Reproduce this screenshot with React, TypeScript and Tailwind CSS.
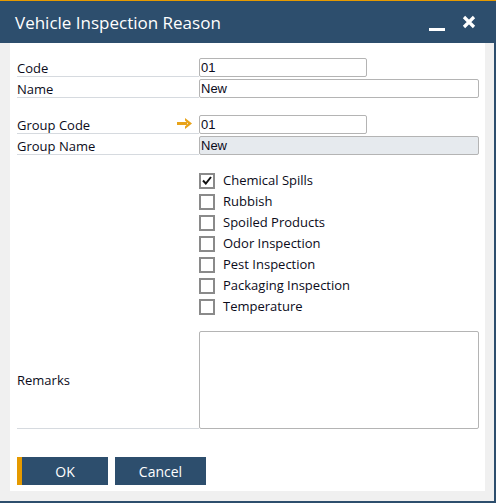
import { useState } from "react";

const items = [
    { label: "Chemical Spills", checked: true },
    { label: "Rubbish", checked: false },
    { label: "Spoiled Products", checked: false },
    { label: "Odor Inspection", checked: false },
    { label: "Pest Inspection", checked: false },
    { label: "Packaging Inspection", checked: false },
    { label: "Temperature", checked: false },
];

const Label = ({ text, arrow }: { text: string; arrow?: boolean }) => (
    <div className="flex h-[19px] w-[182px] items-center justify-between border-b border-[#d6dadf] pt-[2px] leading-none">
        <span>{text}</span>
        {arrow && (
            <svg width="15" height="11" viewBox="0 0 15 11" className="mb-[3px] mr-[7px]">
                <rect x="0" y="4" width="10" height="3" fill="#e8a31a" />
                <polygon points="8,0 15,5.5 8,11 8,8.5 11,5.5 8,2.5" fill="#e8a31a" />
            </svg>
        )}
    </div>
);

const Field = ({ value, wide, gray }: { value: string; wide?: boolean; gray?: boolean }) => (
    <div
        className={`flex h-[19px] items-center rounded-[2px] border border-[#b4b4b4] pl-[1px] font-['Liberation_Sans',sans-serif] text-[13px] leading-none ${wide ? "w-[280px]" : "w-[168px]"} ${gray ? "bg-[#e6eaee]" : "bg-white"}`}
    >
        {value}
    </div>
);

const App = () => {
    const [checks, setChecks] = useState(items.map((i) => i.checked));

    return (
        <div className="flex h-[503px] w-[496px] flex-col bg-white font-['Open_Sans',sans-serif] text-[13px] text-[#0b0b1a]">
            <div className="h-px bg-[#e59a00]" />
            <div className="flex h-[42px] items-center justify-between bg-[#2d4e6d] pl-[15px] pr-[20px] text-white">
                <span className="text-[17px] leading-none">Vehicle Inspection Reason</span>
                <div className="flex items-center gap-[17px]">
                    <div className="mt-[14px] h-[3px] w-[16px] bg-white" />
                    <svg width="14" height="14" viewBox="0 0 14 14">
                        <path d="M2 2 L12 12 M12 2 L2 12" stroke="white" strokeWidth="3.2" />
                    </svg>
                </div>
            </div>

            <div className="flex flex-1 border-b-2 border-r-2 border-[#2d4e6d] bg-[#f0f0f0] pb-[10px] pl-[10px] pr-[9px]">
                <div className="flex flex-1 flex-col bg-white pl-[7px] pt-[15px]">
                    <div className="flex flex-col gap-[2px]">
                        <div className="flex">
                            <Label text="Code" />
                            <Field value="01" />
                        </div>
                        <div className="flex">
                            <Label text="Name" />
                            <Field value="New" wide />
                        </div>
                    </div>

                    <div className="mt-[17px] flex flex-col gap-[2px]">
                        <div className="flex">
                            <Label text="Group Code" arrow />
                            <Field value="01" />
                        </div>
                        <div className="flex">
                            <Label text="Group Name" />
                            <Field value="New" wide gray />
                        </div>
                    </div>

                    <div className="ml-[182px] mt-[15px] flex flex-col">
                        {items.map((item, i) => (
                            <label key={item.label} className="flex h-[21px] items-center gap-[8px]">
                                <span
                                    onClick={() => setChecks(checks.map((c, j) => (j === i ? !c : c)))}
                                    className="flex h-[16px] w-[16px] items-center justify-center border-2 border-[#8a8a8a] bg-white"
                                >
                                    {checks[i] && (
                                        <svg width="10" height="9" viewBox="0 0 10 9">
                                            <path d="M1 4.5 L3.8 7.5 L9 1" stroke="#111" strokeWidth="2" fill="none" />
                                        </svg>
                                    )}
                                </span>
                                <span className="leading-none">{item.label}</span>
                            </label>
                        ))}
                    </div>

                    <div className="mt-[14px] flex">
                        <div className="flex h-[98px] w-[182px] items-center border-b border-[#d6dadf] pt-[3px]">Remarks</div>
                        <div className="h-[98px] w-[280px] rounded-[2px] border border-[#b4b4b4]" />
                    </div>

                    <div className="mt-[28px] flex gap-[7px] text-[14px] text-white">
                        <button className="flex h-[28px] w-[91px] items-center justify-center border-l-[5px] border-[#e59a00] bg-[#2d4e6d]">
                            OK
                        </button>
                        <button className="flex h-[28px] w-[91px] items-center justify-center bg-[#2d4e6d]">Cancel</button>
                    </div>
                </div>
            </div>
        </div>
    );
};

export default App;
